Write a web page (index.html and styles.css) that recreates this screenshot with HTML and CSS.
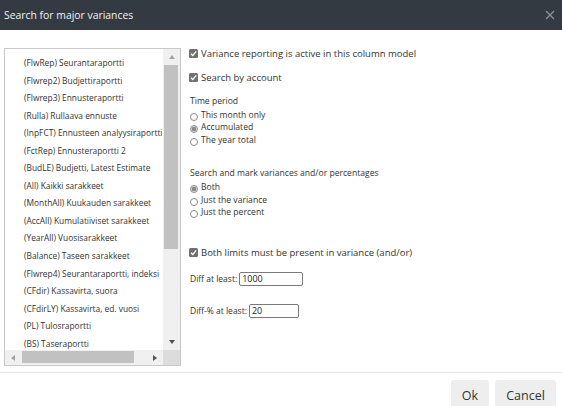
FILE: index.html
```html
<!DOCTYPE html>
<html>
<head>
<meta charset="utf-8">
<link rel="stylesheet" href="styles.css">
</head>
<body>
<div class="dialog">
  <header class="titlebar">
    <span class="title">Search for major variances</span>
    <svg class="close" viewBox="0 0 10 10" width="10" height="10"><path d="M1 1 L9 9 M9 1 L1 9" stroke="#8c9197" stroke-width="1.3" fill="none"/></svg>
  </header>
  <main class="content">
    <div class="listbox">
      <div class="items">
        <div class="item">(FlwRep) Seurantaraportti</div>
        <div class="item">(Flwrep2) Budjettiraportti</div>
        <div class="item">(Flwrep3) Ennusteraportti</div>
        <div class="item">(Rulla) Rullaava ennuste</div>
        <div class="item">(InpFCT) Ennusteen analyysiraportti</div>
        <div class="item">(FctRep) Ennusteraportti 2</div>
        <div class="item">(BudLE) Budjetti, Latest Estimate</div>
        <div class="item">(All) Kaikki sarakkeet</div>
        <div class="item">(MonthAll) Kuukauden sarakkeet</div>
        <div class="item">(AccAll) Kumulatiiviset sarakkeet</div>
        <div class="item">(YearAll) Vuosisarakkeet</div>
        <div class="item">(Balance) Taseen sarakkeet</div>
        <div class="item">(Flwrep4) Seurantaraportti, indeksi</div>
        <div class="item">(CFdir) Kassavirta, suora</div>
        <div class="item">(CFdirLY) Kassavirta, ed. vuosi</div>
        <div class="item">(PL) Tulosraportti</div>
        <div class="item">(BS) Taseraportti</div>
      </div>
      <div class="vscroll">
        <span class="btn"><span class="tri up"></span></span>
        <span class="vthumb"></span>
        <span class="spacer"></span>
        <span class="btn"><span class="tri down"></span></span>
      </div>
      <div class="hscroll">
        <span class="btn"><span class="tri left"></span></span>
        <span class="hthumb"></span>
        <span class="spacer"></span>
        <span class="btn"><span class="tri right"></span></span>
      </div>
      <div class="corner"></div>
    </div>

    <div class="options">
      <div class="check-row">
        <svg class="cb" viewBox="0 0 9 9" width="9" height="9"><rect width="9" height="9" rx="1.5" fill="#707070"/><path d="M2 4.7 L3.8 6.5 L7.2 2.4" stroke="#fff" stroke-width="1.3" fill="none"/></svg>
        <span>Variance reporting is active in this column model</span>
      </div>
      <div class="check-row mt8">
        <svg class="cb" viewBox="0 0 9 9" width="9" height="9"><rect width="9" height="9" rx="1.5" fill="#707070"/><path d="M2 4.7 L3.8 6.5 L7.2 2.4" stroke="#fff" stroke-width="1.3" fill="none"/></svg>
        <span>Search by account</span>
      </div>

      <div class="group g1">
        <div class="label">Time period</div>
        <div class="radio-row"><span class="radio"></span><span>This month only</span></div>
        <div class="radio-row"><span class="radio on"></span><span>Accumulated</span></div>
        <div class="radio-row"><span class="radio"></span><span>The year total</span></div>
      </div>

      <div class="group g2">
        <div class="label">Search and mark variances and/or percentages</div>
        <div class="radio-row"><span class="radio on"></span><span>Both</span></div>
        <div class="radio-row"><span class="radio"></span><span>Just the variance</span></div>
        <div class="radio-row"><span class="radio"></span><span>Just the percent</span></div>
      </div>

      <div class="check-row g3">
        <svg class="cb" viewBox="0 0 9 9" width="9" height="9"><rect width="9" height="9" rx="1.5" fill="#707070"/><path d="M2 4.7 L3.8 6.5 L7.2 2.4" stroke="#fff" stroke-width="1.3" fill="none"/></svg>
        <span>Both limits must be present in variance (and/or)</span>
      </div>

      <div class="field-row f1">
        <span>Diff at least:</span>
        <span class="num w64">1000</span>
      </div>
      <div class="field-row f2">
        <span>Diff-% at least:</span>
        <span class="num w50">20</span>
      </div>
    </div>
  </main>
  <footer class="footer">
    <button class="button ok">Ok</button>
    <button class="button cancel">Cancel</button>
  </footer>
</div>
</body>
</html>
```

FILE: styles.css
```css
html, body {
  margin: 0;
  padding: 0;
  height: 100%;
  overflow: hidden;
  background: #fff;
}
body {
  font-family: "Open Sans", "DejaVu Sans", sans-serif;
  color: #333;
}
.titlebar {
  height: 30px;
  background: #343a42;
  display: flex;
  align-items: center;
  justify-content: space-between;
  padding: 0 7px 0 4px;
  box-sizing: border-box;
}
.title {
  color: #f2f2f2;
  font-size: 10.4px;
}
.close {
  display: block;
}
.content {
  display: flex;
  align-items: flex-start;
  height: 342px;
  box-sizing: border-box;
  padding: 14px 0 0 4px;
}
.listbox {
  margin-top: 4px;
  width: 177px;
  height: 318px;
  flex: none;
  border: 1px solid #c8c8c8;
  box-sizing: border-box;
  display: grid;
  grid-template-columns: 1fr 17px;
  grid-template-rows: 1fr 15px;
}
.items {
  overflow: hidden;
  padding: 5px 0 0 19px;
  font-size: 8.4px;
  line-height: 17.55px;
  white-space: nowrap;
  color: #333;
}
.vscroll {
  background: #f0f0f0;
  display: flex;
  flex-direction: column;
}
.hscroll {
  background: #f0f0f0;
  display: flex;
}
.corner {
  background: #dcdcdc;
}
.btn {
  flex: none;
  width: 16px;
  height: 16px;
  display: flex;
  align-items: center;
  justify-content: center;
}
.vscroll .btn { width: 17px; }
.hscroll .btn { height: 15px; }
.spacer { flex: 1; }
.vthumb {
  height: 184px;
  margin: 0 2px 0 1px;
  background: #c1c1c1;
}
.hthumb {
  width: 112px;
  margin: 1px 0 2px 1px;
  background: #c1c1c1;
}
.tri {
  width: 0;
  height: 0;
}
.tri.up {
  border-left: 3.5px solid transparent;
  border-right: 3.5px solid transparent;
  border-bottom: 4px solid #a3a3a3;
}
.tri.down {
  border-left: 3.5px solid transparent;
  border-right: 3.5px solid transparent;
  border-top: 4px solid #505050;
}
.tri.left {
  border-top: 3.5px solid transparent;
  border-bottom: 3.5px solid transparent;
  border-right: 4px solid #a3a3a3;
}
.tri.right {
  border-top: 3.5px solid transparent;
  border-bottom: 3.5px solid transparent;
  border-left: 4px solid #505050;
}

.options {
  display: flex;
  flex-direction: column;
  padding: 1px 0 0 9px;
}
.check-row {
  display: flex;
  align-items: center;
  height: 16px;
  font-size: 9.5px;
  white-space: nowrap;
}
.cb {
  flex: none;
  margin: 0 3px 0 -1px;
}
.mt8 { margin-top: 8px; }
.group {
  display: flex;
  flex-direction: column;
  font-size: 8.6px;
}
.g1 { margin-top: 10.2px; }
.g2 { margin-top: 20.9px; }
.g3 { margin-top: 26px; }
.label {
  line-height: 13px;
}
.radio-row {
  display: flex;
  align-items: center;
  height: 12.8px;
  white-space: nowrap;
}
.radio {
  flex: none;
  width: 8px;
  height: 8px;
  margin-right: 3px;
  border: 1px solid #8a8a8a;
  border-radius: 50%;
  background: #fff;
  box-sizing: border-box;
  transform: translateY(2px);
}
.radio.on {
  background: radial-gradient(circle, #8a8a8a 0 2px, #e4e4e4 2.6px);
}
.field-row {
  display: flex;
  align-items: center;
  height: 14px;
  font-size: 8.5px;
  white-space: nowrap;
}
.f1 { margin-top: 11px; }
.f2 { margin-top: 18px; }
.num {
  margin-left: 2px;
  height: 14px;
  border: 1px solid #7a7a7a;
  border-radius: 2px;
  box-sizing: border-box;
  padding: 0 2px;
  font-size: 9px;
  line-height: 12px;
  color: #222;
}
.w64 { width: 64px; }
.w50 { width: 50px; }

.footer {
  border-top: 1px solid #e5e5e5;
  display: flex;
  justify-content: flex-end;
  gap: 6px;
  padding: 7px 6px 0 0;
}
.button {
  height: 30px;
  padding: 0;
  border: none;
  border-radius: 3px;
  background: #eeeeee;
  color: #333;
  font-family: "Open Sans", "DejaVu Sans", sans-serif;
  font-size: 12.5px;
}
.ok { width: 38px; }
.cancel { width: 61px; }
```
